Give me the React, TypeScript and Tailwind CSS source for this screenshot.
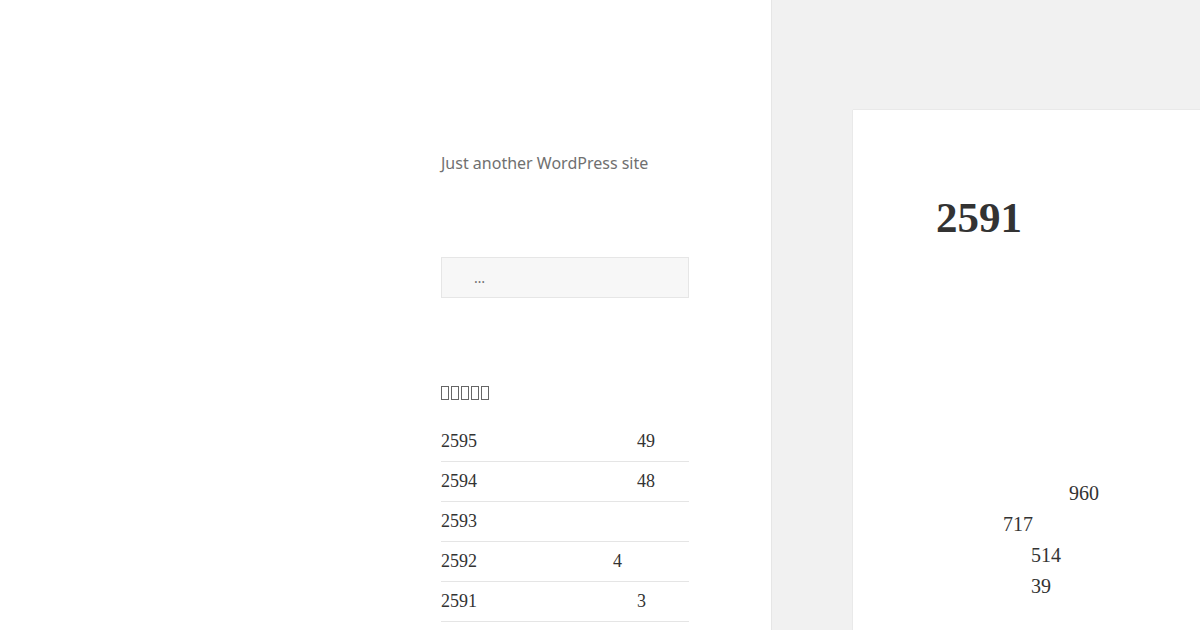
import React from 'react';

const serif = { fontFamily: '"Liberation Serif", "DejaVu Serif", serif' };
const sans = { fontFamily: '"Noto Sans", "Open Sans", sans-serif' };

const recent = [
  { title: '2595', pad: 'w-[196px]', count: '49' },
  { title: '2594', pad: 'w-[196px]', count: '48' },
  { title: '2593', pad: 'w-[196px]', count: '' },
  { title: '2592', pad: 'w-[172px]', count: '4' },
  { title: '2591', pad: 'w-[196px]', count: '3' },
];

const body = [
  { text: '960', pad: 'pl-[133px]' },
  { text: '717', pad: 'pl-[67px]' },
  { text: '514', pad: 'pl-[95px]' },
  { text: '39', pad: 'pl-[95px]' },
];

function Tofu() {
  return <span className="inline-block w-[8px] h-[14px] border border-[#666] mr-[2px] align-middle" />;
}

export default function App() {
  return (
    <div className="flex w-[1200px] h-[630px] overflow-hidden bg-[#f1f1f1]">
      {/* Sidebar */}
      <aside className="w-[771px] shrink-0 bg-white shadow-[0_0_1px_rgba(0,0,0,0.25)] pl-[441px] z-10">
        <div className="w-[248px]">
          <p style={sans} className="mt-[151px] text-[16px] leading-[24px] text-[#707070]">
            Just another WordPress site
          </p>

          <div className="mt-[82px]">
            <input
              readOnly
              placeholder="…"
              style={sans}
              className="w-[248px] h-[41px] bg-[#f7f7f7] border border-[#e6e6e6] pl-[32px] text-[14px] placeholder:text-[#707070] outline-none"
            />
          </div>

          <h2 aria-label="近期文章" className="mt-[85px] h-[20px] flex items-center">
            <Tofu />
            <Tofu />
            <Tofu />
            <Tofu />
            <Tofu />
          </h2>

          <ul style={serif} className="mt-[19px] text-[18px] text-[#333]">
            {recent.map((r) => (
              <li key={r.title} className="h-[40px] flex items-center border-b border-[#e5e5e5]">
                <span className={`inline-block ${r.pad}`}>{r.title}</span>
                <span>{r.count}</span>
              </li>
            ))}
          </ul>
        </div>
      </aside>

      {/* Main */}
      <main className="flex-1 pl-[82px] pt-[110px]">
        <article className="bg-white h-full shadow-[0_0_1px_rgba(0,0,0,0.2)] pl-[83px]">
          <h1 style={serif} className="pt-[84px] text-[43px] leading-[48px] font-bold text-[#333]">
            2591
          </h1>
          <div style={serif} className="mt-[236px] text-[20px] leading-[31px] text-[#333]">
            {body.map((b) => (
              <p key={b.text} className={b.pad}>
                {b.text}
              </p>
            ))}
          </div>
        </article>
      </main>
    </div>
  );
}
